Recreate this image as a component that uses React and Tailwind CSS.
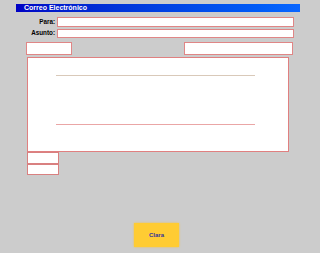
export default function App() {
  const font = { fontFamily: '"Liberation Sans", Arial, sans-serif' };
  return (
    <div className="w-[320px] h-[253px] bg-[#cccccc] flex flex-col pt-[4px]" style={font}>
      <div className="ml-[16px] w-[284px] h-[8px] bg-gradient-to-r from-[#0000c4] to-[#0a66ff] flex items-center pl-[8px]">
        <span className="text-white font-bold text-[7px] leading-[8px]">Correo Electrónico</span>
      </div>
      <div className="mt-[5px] flex items-center h-[10px]">
        <div className="w-[55px] text-right text-[6.3px] font-bold text-black leading-none">Para:</div>
        <div className="ml-[2px] w-[237px] h-[10px] bg-white border border-[#e08686]" />
      </div>
      <div className="mt-[2px] flex items-center h-[9px]">
        <div className="w-[55px] text-right text-[6.3px] font-bold text-black leading-none">Asunto:</div>
        <div className="ml-[2px] w-[237px] h-[9px] bg-white border border-[#e08686]" />
      </div>
      <div className="mt-[4px] flex h-[13px]">
        <div className="ml-[26px] w-[46px] h-[13px] bg-white border border-[#e08686]" />
        <div className="ml-[112px] w-[109px] h-[13px] bg-white border border-[#e08686]" />
      </div>
      <div className="mt-[2px] ml-[27px] w-[262px] h-[95px] bg-white border border-[#e08080] flex flex-col pt-[17px] pl-[28px]">
        <div className="w-[199px] h-[1px] bg-[#d9c9b9]" />
        <div className="mt-[48px] w-[199px] h-[1px] bg-[#eaa6a6]" />
      </div>
      <div className="ml-[27px] w-[32px] h-[12px] bg-white border border-[#d98080]" />
      <div className="ml-[27px] w-[32px] h-[11px] bg-white border border-[#d98080]" />
      <div className="mt-[48px] ml-[134px] w-[45px] h-[24px] bg-[#ffcc33] flex items-center justify-center shadow-[0_0_2px_#f5c542]">
        <span className="text-[6px] font-bold text-[#33339a] leading-none">Clara</span>
      </div>
    </div>
  );
}
